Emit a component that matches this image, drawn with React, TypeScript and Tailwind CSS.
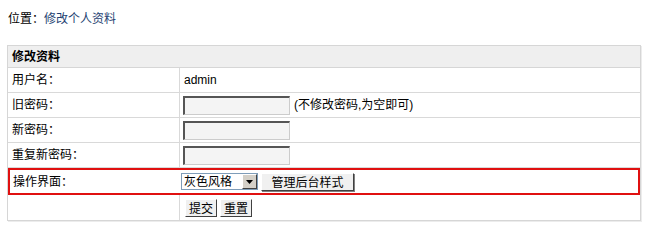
import React from "react";

const font = {
  fontFamily: '"Liberation Sans", "Noto Sans CJK SC", sans-serif',
};

const Field: React.FC = () => (
  <input
    type="password"
    className="h-[19px] w-[107px] border-t-2 border-l-2 border-b border-r border-t-[#555] border-l-[#555] border-b-[#ccc] border-r-[#ccc] bg-[#f4f4f4] outline-none"
  />
);

const Row: React.FC<{ label?: string; children?: React.ReactNode; last?: boolean }> = ({
  label,
  children,
  last,
}) => (
  <div
    className={`grid grid-cols-[172px_1fr] h-[25px] ${last ? "" : "border-b border-[#d9d9d9]"}`}
  >
    <div className="flex items-center pl-[4px] border-r border-[#d9d9d9]">{label}</div>
    <div className="flex items-center pl-[3px] gap-[4px]">{children}</div>
  </div>
);

const App: React.FC = () => {
  return (
    <div className="w-[650px] h-[241px] bg-white text-[12px] text-black" style={font}>
      <div className="pl-[8px] pt-[10px] h-[45px]">
        位置：<span className="text-[#1e3f72]">修改个人资料</span>
      </div>

      <div className="ml-[7px] w-[634px] border border-[#d6d6d6] shadow-[1px_1px_0_#ececec]">
        <div className="h-[22px] flex items-center pl-[4px] font-bold bg-[#efefef] border-b border-[#d6d6d6]">
          修改资料
        </div>

        <Row label="用户名：">
          <span className="pl-[1px]">admin</span>
        </Row>
        <Row label="旧密码：">
          <Field />
          <span>(不修改密码,为空即可)</span>
        </Row>
        <Row label="新密码：">
          <Field />
        </Row>
        <Row label="重复新密码：">
          <Field />
        </Row>

        <div className="grid grid-cols-[170px_1fr] h-[27px] border-2 border-[#e01010]">
          <div className="flex items-center pl-[3px]">操作界面：</div>
          <div className="flex items-center gap-[3px] pl-[1px]">
            <div className="flex items-center h-[17px] w-[77px] border border-[#7f9db9] bg-white">
              <span className="flex-1 pl-[2px]">灰色风格</span>
              <span className="w-[15px] h-[15px] bg-[#d4d0c8] border border-t-white border-l-white border-b-[#404040] border-r-[#404040] flex items-center justify-center">
                <svg width="7" height="4" viewBox="0 0 7 4">
                  <path d="M0 0h7L3.5 4z" fill="#000" />
                </svg>
              </span>
            </div>
            <button className="h-[18px] w-[93px] bg-[#f0f0f0] border border-t-white border-l-white border-b-[#404040] border-r-[#404040] shadow-[1px_1px_0_#808080]">
              管理后台样式
            </button>
          </div>
        </div>

        <Row last>
          <div className="flex gap-[3px] pl-[2px]">
            <button className="h-[18px] px-[3px] bg-[#f0f0f0] border border-t-white border-l-white border-b-[#404040] border-r-[#404040]">
              提交
            </button>
            <button className="h-[18px] px-[3px] bg-[#f0f0f0] border border-t-white border-l-white border-b-[#404040] border-r-[#404040]">
              重置
            </button>
          </div>
        </Row>
      </div>
    </div>
  );
};

export default App;
